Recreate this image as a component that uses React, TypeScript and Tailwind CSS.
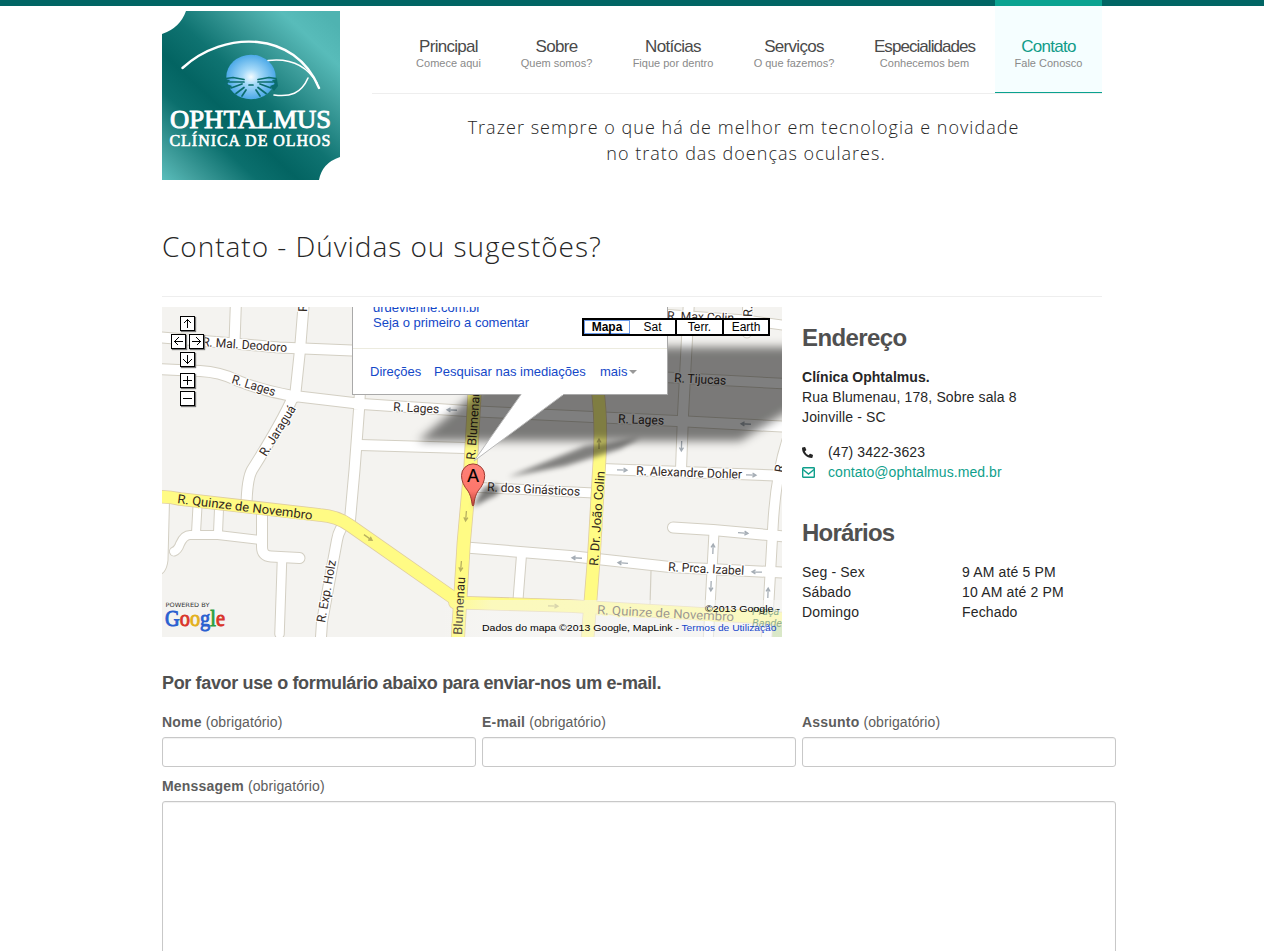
import React from "react";
import { FaPhoneAlt } from "react-icons/fa";

const navItems = [
  { title: "Principal", sub: "Comece aqui", width: "w-[105px]" },
  { title: "Sobre", sub: "Quem somos?", width: "w-[111px]" },
  { title: "Notícias", sub: "Fique por dentro", width: "w-[122px]" },
  { title: "Serviços", sub: "O que fazemos?", width: "w-[120px]" },
  { title: "Especialidades", sub: "Conhecemos bem", width: "w-[141px]" },
  { title: "Contato", sub: "Fale Conosco", width: "w-[107px]", active: true },
];

function Logo() {
  return (
    <svg width="178" height="169" viewBox="0 0 178 169" role="img" aria-label="Ophtalmus" className="block">
      <defs>
        <linearGradient id="lg" gradientUnits="userSpaceOnUse" x1="10" y1="178" x2="168" y2="8">
          <stop offset="0" stopColor="#5abdbb" />
          <stop offset="0.1" stopColor="#419f9d" />
          <stop offset="0.28" stopColor="#0b6f6d" />
          <stop offset="0.4" stopColor="#036462" />
          <stop offset="0.55" stopColor="#0f7371" />
          <stop offset="0.75" stopColor="#3f9f9d" />
          <stop offset="0.88" stopColor="#58bcba" />
          <stop offset="1" stopColor="#4fb3b1" />
        </linearGradient>
        <radialGradient id="iris" cx="0.5" cy="0.5" r="0.5">
          <stop offset="0" stopColor="#f4fcff" />
          <stop offset="0.35" stopColor="#a6daf9" />
          <stop offset="1" stopColor="#4ca9e8" />
        </radialGradient>
      </defs>
      <path d="M24 0H178V146Q160 152 157 169H0V23Q18 17 24 0Z" fill="url(#lg)" />
      <ellipse cx="89" cy="66" rx="24.700" ry="22.300" fill="url(#iris)" />
      <g fill="none" stroke="#0b6d6d" strokeLinecap="round" strokeWidth="1.700">
        <path d="M64 67.500L71 66.500L82 68.500M67 71H82M69 77L80 73M74 82.500L82 76.500M80 85L84 79" />
        <path d="M114 67.500L107 66.500L96 68.500M111 71H96M109 77L98 73M104 82.500L96 76.500M98 85L94 79M87 74H91" />
      </g>
      <path d="M63 68L68 69L65 73L70 75L66 80L62 75ZM115 68L110 69L113 73L108 75L112 80L116 75Z" fill="#0b6d6d" />
      <g fill="none" stroke="#fff" strokeLinecap="round">
        <path d="M20.500 57C62 19 133 19 157 77" strokeWidth="2.400" />
        <path d="M106 49.500C128 47 145 55 155 72" strokeWidth="1.500" />
        <path d="M146 67C139 83 128 86 112 84" strokeWidth="1.600" />
      </g>
      <g fill="#fff" stroke="#fff" fontFamily="Liberation Serif, serif">
        <text x="8" y="116.500" fontSize="26" strokeWidth="0.900" textLength="161" lengthAdjust="spacingAndGlyphs">OPHTALMUS</text>
        <text x="7.500" y="134.500" fontSize="16" strokeWidth="0.600" textLength="161">CLÍNICA DE OLHOS</text>
      </g>
    </svg>
  );
}

const streets: [string, number][] = [
  ["M155 337L240 344L279 347.500L352 350.500L400 354", 10],
  ["M155 369L200 371Q220 372 236 380Q260 390 290 395.500L362 404L467 411L593 417L677 421L790 427", 10],
  ["M236 300L234.500 343", 10],
  ["M304 300L300 350L295 397", 10],
  ["M293 397Q281 424 252 470Q247 479 246.500 505", 10],
  ["M360 390L359 410L354.500 470L350 520", 10],
  ["M348 520Q339 528 337 540L322 622L320.500 645", 10],
  ["M360 445L465 448L473 449", 10],
  ["M470 487L594 493", 9],
  ["M165 500L163.500 560Q162 572 156 570", 8],
  ["M174 551.500Q178 550 180 544Q184 535 190 535L218 535L260 540", 8],
  ["M197.500 506L196 533", 8],
  ["M219 509L218 533", 8],
  ["M262 515L262 547Q262 556 271 556.500L299.500 558", 10],
  ["M282 560L279.500 634", 8.5],
  ["M689 300L683 415L681 470", 10],
  ["M660 377L790 384", 9.5],
  ["M660 314L745 320L790 326", 9],
  ["M748 300L747 320", 9],
  ["M602 469L790 476", 10],
  ["M790 432Q776 470 773 525L766 650", 9.5],
  ["M673 527.500L713 530L790 537", 10],
  ["M714 532L708 645", 9],
  ["M466 547.500L570 556L670 567L790 573", 10],
  ["M521.500 555L518 600", 9],
];

const avenues: [string, number][] = [
  ["M155 497Q166 496 180 499L320 515Q337 516 350 525.500L455 599", 12],
  ["M475 385L470.500 467L463.700 543L457.500 645", 12.5],
  ["M597 385Q602 420 599.500 460L593.700 560L587 645", 12],
  ["M455 602.500L570 606L790 619", 12],
];

function Arrow({ x, y, a, dark }: { x: number; y: number; a: number; dark?: boolean }) {
  return (
    <path
      d="M-5 0H5M1.500 -2L5 0L1.500 2"
      transform={`translate(${x} ${y}) rotate(${a})`}
      fill="none"
      stroke={dark ? "#b8b060" : "#a5adb5"}
      strokeWidth="1.300"
    />
  );
}

const labels: { t: string; x: number; y: number; a: number; w: number }[] = [
  { t: "R. Mal. Deodoro", x: 202, y: 346, a: 4, w: 85 },
  { t: "R. Lages", x: 231, y: 383, a: 17, w: 45 },
  { t: "R. Jaraguá", x: 266, y: 457, a: -58, w: 57 },
  { t: "R. Lages", x: 393, y: 411, a: 3, w: 46 },
  { t: "R. Blumenau", x: 475, y: 460, a: -86, w: 70 },
  { t: "R. dos Ginásticos", x: 487, y: 491, a: 3, w: 93 },
  { t: "R. Quinze de Novembro", x: 177, y: 503, a: 7, w: 136 },
  { t: "R. Exp. Holz", x: 325, y: 623, a: -80, w: 63 },
  { t: "Blumenau", x: 462, y: 635, a: -87, w: 58 },
  { t: "R. Dr. João Colin", x: 598, y: 566, a: -86, w: 95 },
  { t: "R. Tijucas", x: 674, y: 382, a: 3, w: 52 },
  { t: "R. Lages", x: 618, y: 423, a: 2, w: 46 },
  { t: "R. Alexandre Dohler", x: 636, y: 475, a: 2, w: 106 },
  { t: "R. Prca. Izabel", x: 668, y: 571, a: 3, w: 76 },
  { t: "R. Max Colin", x: 667, y: 320, a: 2, w: 67 },
  { t: "R. Quinze de Novembro", x: 597, y: 614, a: 3, w: 137 },
];

function MapCanvas() {
  return (
    <svg width="620" height="330" viewBox="162 307 620 330" className="block">
      <defs>
        <filter id="soft" x="-20%" y="-20%" width="140%" height="140%">
          <feGaussianBlur stdDeviation="5" />
        </filter>
        <filter id="soft2" x="-40%" y="-40%" width="180%" height="180%">
          <feGaussianBlur stdDeviation="2.500" />
        </filter>
        <linearGradient id="fade" x1="0" x2="1">
          <stop offset="0" stopColor="#f7f7f5" stopOpacity="0" />
          <stop offset="0.15" stopColor="#f7f7f5" stopOpacity="0.5" />
          <stop offset="1" stopColor="#f7f7f5" stopOpacity="0.55" />
        </linearGradient>
        <linearGradient id="pin" x1="0" x2="0" y1="0" y2="1">
          <stop offset="0" stopColor="#ff8177" />
          <stop offset="0.65" stopColor="#fc766b" />
          <stop offset="1" stopColor="#b83f36" />
        </linearGradient>
      </defs>
      <rect x="162" y="307" width="620" height="330" fill="#f4f3f0" />
      <path d="M765 622H782V637H765Z" fill="#b5d590" />
      <g fill="none" strokeLinecap="round" strokeLinejoin="round">
        {streets.map(([d, w]) => (
          <path key={d} d={d} stroke="#d3cfc3" strokeWidth={w + 2} />
        ))}
        <path d="M651 571L650 606" stroke="#d3cfc3" strokeWidth="1.200" />
        {streets.map(([d, w]) => (
          <path key={d} d={d} stroke="#fff" strokeWidth={w} />
        ))}
        {avenues.map(([d, w]) => (
          <path key={d} d={d} stroke="#dfcda0" strokeWidth={w + 1.6} />
        ))}
        {avenues.map(([d, w]) => (
          <path key={d} d={d} stroke="#fffb84" strokeWidth={w} />
        ))}
        <circle cx="747" cy="333" r="5" fill="#fff" stroke="#d3cfc3" />
      </g>
      <Arrow x={452} y={410} a={183} />
      <Arrow x={746} y={424} a={183} />
      <Arrow x={599} y={444} a={-90} dark />
      <Arrow x={681.5} y={446} a={92} />
      <Arrow x={622} y={470} a={2} />
      <Arrow x={751} y={475} a={2} />
      <Arrow x={743} y={533} a={4} />
      <Arrow x={577} y={558} a={183} />
      <Arrow x={623} y={563} a={184} />
      <Arrow x={757} y={572} a={182} />
      <Arrow x={713} y={549} a={-88} />
      <Arrow x={711} y={586} a={92} />
      <Arrow x={768} y={593} a={-88} />
      <Arrow x={466} y={516} a={95} dark />
      <Arrow x={461} y={566} a={95} dark />
      <Arrow x={368} y={537.5} a={35} dark />
      <Arrow x={553} y={606} a={2} dark />
      <g fontFamily="Roboto, sans-serif" fontSize="12.500" fill="#33291f" stroke="#fff" strokeOpacity="0.850" strokeWidth="2.500" paintOrder="stroke">
        {labels.map((l) => (
          <text
            key={l.t + l.x}
            transform={`translate(${l.x} ${l.y}) rotate(${l.a})`}
            textLength={l.w}
            lengthAdjust="spacingAndGlyphs"
            stroke={/Quinze|Blumenau|João/.test(l.t) ? "#fffb84" : "#fff"}
          >
            {l.t}
          </text>
        ))}
        <text transform="translate(752 317) rotate(-88)">R.</text>
        <text transform="translate(307 312) rotate(-88)">R</text>
        <text transform="translate(783 473) rotate(-80)">R.</text>
      </g>
      <path d="M418 441L470 397L525 347H810V398L740 441Z" fill="#000" fillOpacity="0.500" filter="url(#soft)" />
      <path d="M508 477L585 446L640 438L620 449L565 466Z" fill="#000" fillOpacity="0.480" filter="url(#soft2)" />
      <path d="M473 507L483 488Q492 482 500 487Q502 494 490 498Z" fill="#000" fillOpacity="0.500" filter="url(#soft2)" />
      <rect x="440" y="600" width="342" height="37" fill="url(#fade)" />
      <g fontFamily="Roboto, sans-serif" fontSize="11" fontStyle="italic" fill="#8fae8f">
        <text x="752" y="615">Praça</text>
        <text x="752" y="627">Bandeira</text>
      </g>
      <rect x="352.500" y="290" width="315" height="104.500" fill="#fff" stroke="#a9a9a9" />
      <path d="M353 348.500H667" stroke="#ecebdf" />
      <path d="M521 394.500L474 461L563.500 394.500" fill="#fff" stroke="#b9b9b9" />
      <path d="M521.500 393H563V395H521.500Z" fill="#fff" />
      <path d="M473 506C471.500 506 472.500 498 468 491Q461.500 483.500 461.500 475.500A11.600 11.600 0 0 1 484.700 475.500Q484.700 483.500 478 491C473.500 498 474.500 506 473 506Z" fill="url(#pin)" stroke="#9c3931" />
      <text x="473" y="481.500" textAnchor="middle" fontFamily="Liberation Sans, sans-serif" fontSize="17.500" stroke="#000" strokeWidth="0.200">A</text>
      <text x="165.500" y="607" fontFamily="DejaVu Sans, sans-serif" fontSize="6" fill="#333" textLength="44" lengthAdjust="spacingAndGlyphs">POWERED BY</text>
      <text x="165" y="626" fontFamily="Liberation Serif, serif" fontSize="22.500" strokeWidth="0.900" textLength="60" lengthAdjust="spacingAndGlyphs">
        <tspan fill="#2a60d0" stroke="#2a60d0">G</tspan>
        <tspan fill="#d9352b" stroke="#d9352b">o</tspan>
        <tspan fill="#e3b01c" stroke="#e3b01c">o</tspan>
        <tspan fill="#2a60d0" stroke="#2a60d0">g</tspan>
        <tspan fill="#2f9e41" stroke="#2f9e41">l</tspan>
        <tspan fill="#d9352b" stroke="#d9352b">e</tspan>
      </text>
      <g fontFamily="Liberation Sans, sans-serif" fontSize="9.500">
        <text x="705" y="612" textLength="75" lengthAdjust="spacingAndGlyphs">©2013 Google -</text>
        <text x="482" y="631" textLength="197" lengthAdjust="spacingAndGlyphs">Dados do mapa ©2013 Google, MapLink -</text>
        <text x="681.500" y="631" fill="#1545cc" textLength="95" lengthAdjust="spacingAndGlyphs">Termos de Utilização</text>
      </g>
    </svg>
  );
}

function MapButton({ d, place, label }: { d: string; place: string; label: string }) {
  return (
    <button aria-label={label} className={`absolute size-[15px] border border-black bg-white shadow-[1px_1px_1px_#777] ${place}`}>
      <svg viewBox="0 0 13 13" className="block size-[13px]" fill="none" stroke="#000" strokeWidth="1" shapeRendering="crispEdges">
        <path d={d} />
      </svg>
    </button>
  );
}

function ContactMap() {
  return (
    <div className="relative h-[330px] w-[620px] overflow-hidden">
      <MapCanvas />
      <MapButton label="Norte" place="left-[18px] top-[9px]" d="M6.500 2V11M2.500 6.500L6.500 2.500L10.500 6.500" />
      <MapButton label="Oeste" place="left-[9px] top-[27px]" d="M2 6.500H11M6.500 2.500L2.500 6.500L6.500 10.500" />
      <MapButton label="Leste" place="left-[27px] top-[27px]" d="M2 6.500H11M6.500 2.500L10.500 6.500L6.500 10.500" />
      <MapButton label="Sul" place="left-[18px] top-[45px]" d="M6.500 2V11M2.500 6.500L6.500 10.500L10.500 6.500" />
      <MapButton label="Aproximar" place="left-[18px] top-[66px]" d="M6.500 2V11M2 6.500H11" />
      <MapButton label="Afastar" place="left-[18px] top-[84px]" d="M2 6.500H11" />
      <div className="absolute left-[211px] top-[-7px] text-[13px] leading-[15px] text-[#1448c8]">
        <div>drdevienne.com.br</div>
        <div>Seja o primeiro a comentar</div>
      </div>
      <div className="absolute left-[208px] top-[57px] flex items-center text-[13px] leading-[15px] text-[#1448c8]">
        <span className="w-[64px]">Direções</span>
        <span className="w-[166px]">Pesquisar nas imediações</span>
        <span>mais</span>
        <span className="ml-[2px] border-x-4 border-t-4 border-x-transparent border-t-[#999]" />
      </div>
      <div className="absolute left-[420px] top-[11px] flex h-[18px] w-[188px] border-2 border-black bg-black text-center text-[12px] leading-[14px] text-black">
        <span className="w-[46px] border border-[#6b9bea] bg-white font-bold leading-[13px]">Mapa</span>
        <span className="mr-[2px] w-[45px] bg-white">Sat</span>
        <span className="mr-[2px] w-[45px] bg-white">Terr.</span>
        <span className="flex-1 bg-white">Earth</span>
      </div>
    </div>
  );
}

function Field({ label, children }: { label: string; children: React.ReactNode }) {
  return (
    <label className="block text-[14px] leading-5 text-[#5d5d5d]">
      <span className="block tracking-[0.1px]">
        <b className="tracking-[0.2px]">{label}</b> (obrigatório)
      </span>
      {children}
    </label>
  );
}

const inputBox = "block rounded-[3px] border border-[#c8c8c8] bg-white shadow-[inset_0_1px_1px_rgba(0,0,0,0.06)] outline-none";

export default function App() {
  return (
    <div className="h-[951px] overflow-hidden bg-white font-['Liberation_Sans',Arial,sans-serif] text-[14px] leading-5 text-[#262626]">
      <div className="h-[6px] bg-[#016564]" />
      <div className="mx-auto w-[940px]">
        <header className="flex h-[175px] justify-between">
          <div className="pt-[5px]">
            <Logo />
          </div>
          <div className="w-[730px]">
            <nav className="flex h-[88px] justify-end border-b border-[#eee]">
              {navItems.map((n) => (
                <a
                  key={n.title}
                  className={
                    n.active
                      ? `${n.width} -mt-[6px] h-[93px] border-b border-t-[6px] border-b-[#0aa28f] border-t-[#0aa391] bg-[#f5feff] pt-[31px] text-center text-[#119c89]`
                      : `${n.width} pt-[31px] text-center text-[#4a4a4a]`
                  }
                >
                  <span className={`block text-[17px] leading-[19px] ${n.title === "Especialidades" ? "tracking-[-0.95px]" : "tracking-[-0.7px]"}`}>{n.title}</span>
                  <span className="block text-[11px] leading-[14px] text-[#8a8a8a]">{n.sub}</span>
                </a>
              ))}
            </nav>
            <p className="ml-[18px] mt-[20px] text-center font-['Open_Sans',sans-serif] text-[18px] font-light leading-[26px] tracking-[1.02px]">
              <span className="block pr-[5px]">Trazer sempre o que há de melhor em tecnologia e novidade</span>
              <span className="block">no trato das doenças oculares.</span>
            </p>
          </div>
        </header>
        <h1 className="mt-[45px] h-[71px] border-b border-[#eee] font-['Open_Sans',sans-serif] text-[28px] font-light leading-[40px] tracking-[0.96px]">
          Contato - Dúvidas ou sugestões?
        </h1>
        <div className="mt-[10px] flex gap-5">
          <ContactMap />
          <section className="w-[300px] pt-[11px] tracking-[0.15px]">
            <h2 className="text-[24px] font-bold leading-10 tracking-[-0.6px] text-[#505050]">Endereço</h2>
            <address className="mt-[9px] not-italic">
              <b className="tracking-[0.05px]">Clínica Ophtalmus.</b>
              <br />
              Rua Blumenau, 178, Sobre sala 8<br />
              Joinville - SC
            </address>
            <div className="mt-[15px] flex items-center tracking-[0.1px]">
              <span className="w-[26px]">
                <FaPhoneAlt size={11} />
              </span>
              (47) 3422-3623
            </div>
            <div className="flex items-center tracking-[0.06px] text-[#0f9f8c]">
              <span className="w-[26px]">
                <svg width="13" height="11" viewBox="0 0 13 11" fill="none" stroke="currentColor" strokeWidth="1.400">
                  <rect x="0.700" y="0.700" width="11.600" height="9.600" rx="0.600" />
                  <path d="M1 2.500L6.500 7L12 2.500" />
                </svg>
              </span>
              contato@ophtalmus.med.br
            </div>
            <h2 className="mt-[31px] text-[24px] font-bold leading-10 tracking-[-0.8px] text-[#505050]">Horários</h2>
            <div className="mt-[9px] grid grid-cols-[160px_1fr]">
              <span>Seg - Sex</span>
              <span>9 AM até 5 PM</span>
              <span>Sábado</span>
              <span>10 AM até 2 PM</span>
              <span>Domingo</span>
              <span>Fechado</span>
            </div>
          </section>
        </div>
        <form className="mt-[36px] w-[954px]">
          <h3 className="text-[18px] font-bold leading-5 tracking-[-0.35px] text-[#505050]">
            Por favor use o formulário abaixo para enviar-nos um e-mail.
          </h3>
          <div className="mt-[19px] grid grid-cols-3 gap-[6px]">
            {["Nome", "E-mail", "Assunto"].map((l) => (
              <Field key={l} label={l}>
                <input className={`${inputBox} mt-[5px] h-[30px] w-full`} />
              </Field>
            ))}
          </div>
          <div className="mt-[9px]">
            <Field label="Menssagem">
              <textarea className={`${inputBox} mt-[5px] h-[220px] w-full resize-none`} />
            </Field>
          </div>
        </form>
      </div>
    </div>
  );
}
